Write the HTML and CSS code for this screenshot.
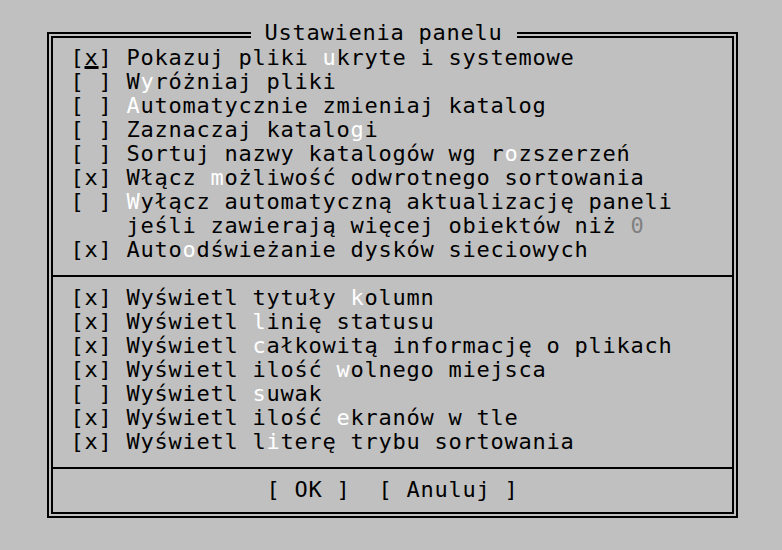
FILE: index.html
```html
<!DOCTYPE html>
<html lang="pl">
<head>
<meta charset="utf-8">
<title>Ustawienia panelu</title>
<link rel="stylesheet" href="styles.css">
</head>
<body>
<div class="dialog">
  <div class="title">Ustawienia panelu</div>
  <div class="section">
    <div class="row">[<span class="cursor">x</span>] Pokazuj pliki <span class="hk">u</span>kryte i systemowe</div>
    <div class="row">[ ] W<span class="hk">y</span>różniaj pliki</div>
    <div class="row">[ ] <span class="hk">A</span>utomatycznie zmieniaj katalog</div>
    <div class="row">[ ] Zaznaczaj katalo<span class="hk">g</span>i</div>
    <div class="row">[ ] Sortuj nazwy katalogów wg r<span class="hk">o</span>zszerzeń</div>
    <div class="row">[x] Włącz <span class="hk">m</span>ożliwość odwrotnego sortowania</div>
    <div class="row">[ ] <span class="hk">W</span>yłącz automatyczną aktualizację paneli</div>
    <div class="row">    jeśli zawierają więcej obiektów niż <span class="field">0</span></div>
    <div class="row">[x] Auto<span class="hk">o</span>dświeżanie dysków sieciowych</div>
  </div>
  <div class="sep"></div>
  <div class="section">
    <div class="row">[x] Wyświetl tytuły <span class="hk">k</span>olumn</div>
    <div class="row">[x] Wyświetl <span class="hk">l</span>inię statusu</div>
    <div class="row">[x] Wyświetl <span class="hk">c</span>ałkowitą informację o plikach</div>
    <div class="row">[x] Wyświetl ilość <span class="hk">w</span>olnego miejsca</div>
    <div class="row">[ ] Wyświetl <span class="hk">s</span>uwak</div>
    <div class="row">[x] Wyświetl ilość <span class="hk">e</span>kranów w tle</div>
    <div class="row">[x] Wyświetl l<span class="hk">i</span>terę trybu sortowania</div>
  </div>
  <div class="sep"></div>
  <div class="buttons">[ OK ]  [ Anuluj ]</div>
</div>
</body>
</html>
```
FILE: styles.css
```css
html, body {
  margin: 0;
  padding: 0;
  background: #c0c0c0;
}
body {
  width: 782px;
  height: 550px;
  overflow: hidden;
  font-family: "DejaVu Sans Mono", monospace;
  font-size: 22px;
  letter-spacing: 0.756px;
  line-height: 24px;
  color: #000;
}
.dialog {
  position: relative;
  box-sizing: border-box;
  margin: 32px 0 0 47px;
  width: 691px;
  height: 486px;
  border: 6px double #000;
  padding: 8px 0 10px 0;
  display: flex;
  flex-direction: column;
}
.title {
  position: absolute;
  top: -17px;
  left: 197.5px;
  padding: 0 14px;
  background: #c0c0c0;
  white-space: pre;
}
.section {
  display: flex;
  flex-direction: column;
  padding-left: 17.5px;
}
.row {
  white-space: pre;
  height: 24px;
}
.hk {
  color: #fff;
}
.field {
  color: #808080;
}
.cursor {
  text-decoration: underline;
  text-decoration-thickness: 3px;
  text-underline-offset: 1px;
}
.sep {
  height: 2px;
  background: #000;
  margin: 13px 0 9px 0;
}
.buttons {
  white-space: pre;
  text-align: center;
  height: 24px;
}
```
